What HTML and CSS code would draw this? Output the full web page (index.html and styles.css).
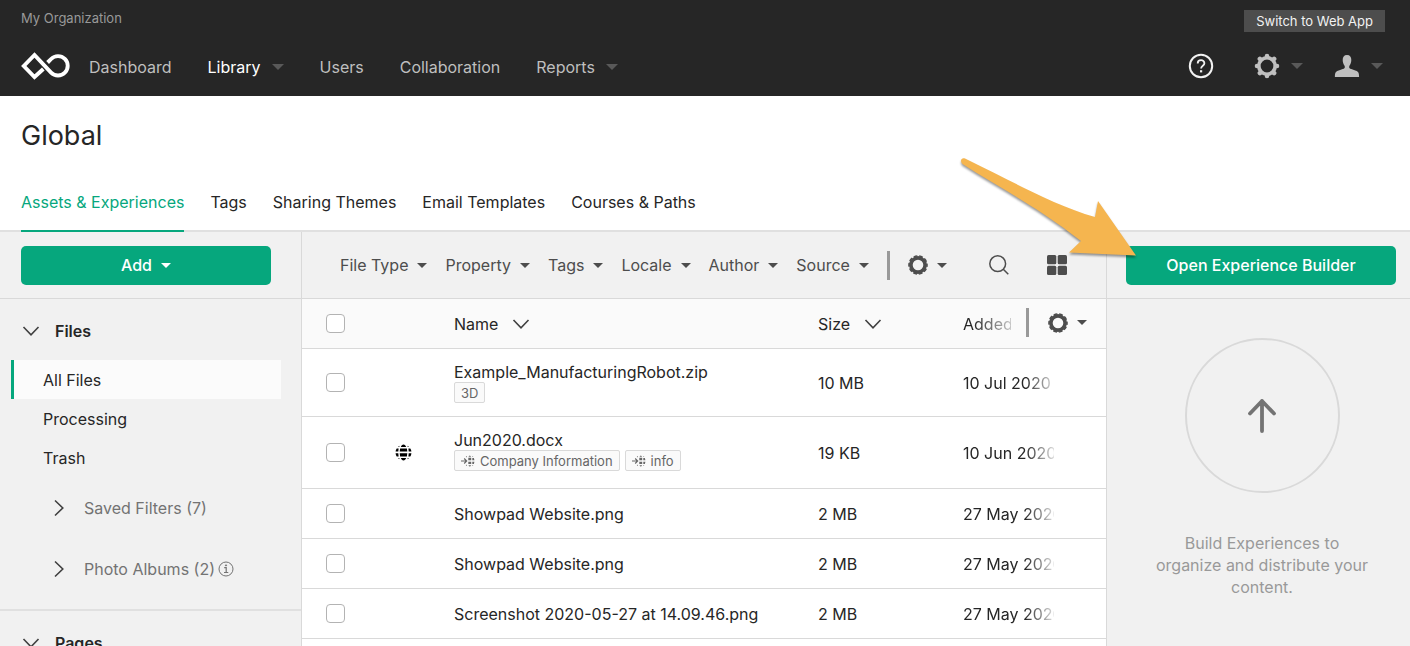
FILE: index.html
```html
<!DOCTYPE html>
<html lang="en">
<head>
<meta charset="utf-8">
<title>Global - Library</title>
<link rel="stylesheet" href="styles.css">
</head>
<body>
<svg class="sprite" aria-hidden="true">
  <symbol id="caret" viewBox="0 0 12 6"><path d="M0 0h12L6 6z" fill="currentColor"/></symbol>
  <symbol id="chevron" viewBox="0 0 18 18"><path d="M1.500 5 9 12.800 16.500 5" fill="none" stroke="currentColor" stroke-width="1.600"/></symbol>
  <symbol id="gear" viewBox="0 0 26 26">
    <circle cx="13" cy="13" r="8.200" fill="none" stroke="currentColor" stroke-width="3.600"/>
    <g stroke="currentColor" stroke-width="4.600" stroke-linecap="round">
      <path d="M13 3v1M13 22v1M3 13h1M22 13h1M5.900 5.900l.7.7M19.400 19.400l.7.7M5.900 20.100l.7-.7M19.400 6.600l.7-.7"/>
    </g>
  </symbol>
  <symbol id="cog" viewBox="0 0 20 20">
    <circle cx="10" cy="10" r="7.100" fill="none" stroke="currentColor" stroke-width="3.600"/>
    <circle cx="10" cy="10" r="9" fill="none" stroke="currentColor" stroke-width="1.600" stroke-dasharray="3.800 1.855" stroke-dashoffset="1.900"/>
  </symbol>
  <symbol id="globe" viewBox="0 0 18 18">
    <g fill="currentColor">
      <path d="M6.200 3.300C6.700 1.700 7.700.7 9 .5c1.300.2 2.300 1.200 2.800 2.800zM6.200 14.700c.5 1.600 1.500 2.600 2.800 2.800 1.300-.2 2.300-1.200 2.800-2.800zM5.400 4.700h7.200l.4 3.300H5zM5 9.800h8l-.4 3.400H5.400z"/>
      <path d="M1.800 4.700h2L3.500 8H.600q.2-1.900 1.200-3.300zM.6 9.800h2.900l.3 3.400h-2Q.8 11.700.6 9.800zM16.200 4.700h-2l.3 3.300h2.900q-.2-1.900-1.200-3.300zM17.400 9.800h-2.900l-.3 3.400h2q1-1.500 1.200-3.400zM3 3.200 5 1.800l-.6 1.500zM15 3.200l-2-1.400.6 1.500zM3 14.800l2 1.400-.6-1.500zM15 14.800l-2 1.400.6-1.500z"/>
    </g>
  </symbol>
  <symbol id="linked" viewBox="0 0 14 12">
    <path d="M0 6h5.500M3.200 3.500 5.700 6 3.200 8.500" fill="none" stroke="currentColor" stroke-width="1.100"/>
    <path d="M7.300 2.800h2.900v2.400H7.300zM7.300 6.700h2.900v2.400H7.300zM11.300 3h1.600l.5 2.200h-2.100zM11.300 6.700h2.100l-.5 2.200h-1.600zM7.500 1.800Q8 .6 8.800.4q.8.200 1.300 1.400zM7.500 10.200q.5 1.200 1.300 1.400.8-.2 1.300-1.400zM4.700 1.900l1.300-.8v1.100zM4.700 10.100l1.300.8V9.800zM11.200 1l1.200.9-1 .2zM11.200 11l1.200-.9-1-.2z" fill="currentColor"/>
  </symbol>
</svg>

<header class="topbar">
  <div class="topbar-meta">
    <span class="org">My Organization</span>
    <button class="switch" type="button">Switch to Web App</button>
  </div>
  <div class="topbar-row">
    <a class="logo" href="#" aria-label="Home">
      <svg width="50" height="28" viewBox="0 0 50 28"><path d="M22.300 17 13.500 25 2.800 14 13.500 3 30.100 20.600A9.700 9.700 0 1 0 30.100 7L26.600 10.500" fill="none" stroke="#fff" stroke-width="3.900"/></svg>
    </a>
    <nav class="mainnav">
      <a href="#">Dashboard</a>
      <a class="current" href="#">Library<svg class="navcaret"><use href="#caret"/></svg></a>
      <a href="#">Users</a>
      <a href="#">Collaboration</a>
      <a href="#">Reports<svg class="navcaret"><use href="#caret"/></svg></a>
    </nav>
    <div class="account">
      <button class="help" type="button" aria-label="Help">
        <svg width="26" height="26" viewBox="0 0 26 26" fill="none" stroke="#f2f2f2"><circle cx="13" cy="13" r="11.200" stroke-width="2"/><path d="M9.700 10.400c0-4.200 6.700-4.200 6.700-.2 0 2.500-3.300 2.500-3.300 5.200" stroke-width="1.800"/><path d="M13.100 17.200v2.200" stroke-width="2.200"/></svg>
      </button>
      <button type="button" aria-label="Settings"><svg width="26" height="26"><use href="#gear"/></svg><svg class="navcaret"><use href="#caret"/></svg></button>
      <button type="button" aria-label="Profile">
        <svg width="26" height="26" viewBox="0 0 26 26"><path d="M13 2c3.100 0 4.300 2 4.300 5 0 2.300-.8 4.500-2 6-.5 2 .2 2.500 2 3.100l4.700 1.700c2.200.8 3.100 2 3.100 6.200H.9c0-4.200.9-5.400 3.100-6.200l4.700-1.700c1.800-.6 2.500-1.100 2-3.100-1.200-1.500-2-3.700-2-6 0-3 1.200-5 4.300-5z" fill="currentColor"/></svg>
        <svg class="navcaret"><use href="#caret"/></svg>
      </button>
    </div>
  </div>
</header>

<section class="heading">
  <h1>Global</h1>
  <nav class="tabs">
    <a class="active" href="#">Assets &amp; Experiences</a>
    <a href="#">Tags</a>
    <a href="#">Sharing Themes</a>
    <a href="#">Email Templates</a>
    <a href="#">Courses &amp; Paths</a>
  </nav>
</section>

<div class="workspace">
  <aside class="sidebar">
    <div class="bar">
      <button class="primary" type="button">Add<svg class="caret"><use href="#caret"/></svg></button>
    </div>
    <section class="group">
      <h2><svg class="chev"><use href="#chevron"/></svg>Files</h2>
      <a class="item selected" href="#">All Files</a>
      <a class="item" href="#">Processing</a>
      <a class="item" href="#">Trash</a>
      <a class="sub" href="#"><svg class="chev right"><use href="#chevron"/></svg>Saved Filters (7)</a>
      <a class="sub" href="#"><svg class="chev right"><use href="#chevron"/></svg>Photo Albums (2)
        <svg class="info" viewBox="0 0 16 16" fill="none" stroke="currentColor"><circle cx="8" cy="8" r="7"/><path d="M6.200 6.700h2v4.600M6 11.500h4.300" stroke-width="1.200"/><circle cx="8" cy="4.400" r=".6" fill="currentColor"/></svg>
      </a>
    </section>
    <section class="group">
      <h2><svg class="chev"><use href="#chevron"/></svg>Pages</h2>
    </section>
  </aside>

  <main class="library">
    <div class="bar filters">
      <button type="button">File Type<svg class="caret"><use href="#caret"/></svg></button>
      <button type="button">Property<svg class="caret"><use href="#caret"/></svg></button>
      <button type="button">Tags<svg class="caret"><use href="#caret"/></svg></button>
      <button type="button">Locale<svg class="caret"><use href="#caret"/></svg></button>
      <button type="button">Author<svg class="caret"><use href="#caret"/></svg></button>
      <button type="button">Source<svg class="caret"><use href="#caret"/></svg></button>
      <span class="divider"></span>
      <button type="button" aria-label="Filter settings"><svg class="icon"><use href="#cog"/></svg><svg class="caret"><use href="#caret"/></svg></button>
      <div class="views">
        <button type="button" aria-label="Search"><svg class="icon" viewBox="0 0 20 20" fill="none" stroke="currentColor" stroke-width="1.500"><circle cx="8.700" cy="8.700" r="7.900"/><path d="m14.300 14.300 5 5"/></svg></button>
        <button type="button" aria-label="Grid view"><svg class="icon" viewBox="0 0 20 20" fill="currentColor"><rect width="9.300" height="9.300" rx="1.500"/><rect x="10.700" width="9.300" height="9.300" rx="1.500"/><rect y="10.700" width="9.300" height="9.300" rx="1.500"/><rect x="10.700" y="10.700" width="9.300" height="9.300" rx="1.500"/></svg></button>
      </div>
    </div>
    <table class="files">
      <colgroup><col class="c-check"><col class="c-icon"><col><col class="c-size"><col class="c-added"></colgroup>
      <thead>
        <tr>
          <th><input type="checkbox" aria-label="Select all"></th>
          <th></th>
          <th><span class="sort">Name<svg class="chev"><use href="#chevron"/></svg></span></th>
          <th><span class="sort">Size<svg class="chev"><use href="#chevron"/></svg></span></th>
          <th><div class="lastcol"><span class="fade-head">Added</span><span class="divider"></span><button type="button" aria-label="Column settings"><svg class="icon"><use href="#cog"/></svg><svg class="caret"><use href="#caret"/></svg></button></div></th>
        </tr>
      </thead>
      <tbody>
        <tr class="tall">
          <td><input type="checkbox" aria-label="Select Example_ManufacturingRobot.zip"></td><td></td>
          <td>Example_ManufacturingRobot.zip<div class="tags"><span class="tag">3D</span></div></td>
          <td>10 MB</td><td><span class="fade">10 Jul 2020</span></td>
        </tr>
        <tr class="taller">
          <td><input type="checkbox" aria-label="Select Jun2020.docx"></td>
          <td><svg class="globe"><use href="#globe"/></svg></td>
          <td>Jun2020.docx<div class="tags"><span class="tag"><svg class="linked"><use href="#linked"/></svg>Company Information</span><span class="tag"><svg class="linked"><use href="#linked"/></svg>info</span></div></td>
          <td>19 KB</td><td><span class="fade">10 Jun 2020</span></td>
        </tr>
        <tr>
          <td><input type="checkbox" aria-label="Select Showpad Website.png"></td><td></td>
          <td>Showpad Website.png</td><td>2 MB</td><td><span class="fade">27 May 2020</span></td>
        </tr>
        <tr>
          <td><input type="checkbox" aria-label="Select Showpad Website.png"></td><td></td>
          <td>Showpad Website.png</td><td>2 MB</td><td><span class="fade">27 May 2020</span></td>
        </tr>
        <tr>
          <td><input type="checkbox" aria-label="Select Screenshot"></td><td></td>
          <td>Screenshot 2020-05-27 at 14.09.46.png</td><td>2 MB</td><td><span class="fade">27 May 2020</span></td>
        </tr>
      </tbody>
    </table>
  </main>

  <aside class="builder">
    <div class="bar">
      <button class="primary" type="button">Open Experience Builder</button>
      <svg class="pointer" viewBox="0 0 190 110"><path d="M7 3.500C50 24 95 50 137 62L140 46 178 100.500 111 97.500 123 86C80 52 40 32 4.500 9 1.500 6 3.500 2 7 3.500z" fill="#f5b54f"/></svg>
    </div>
    <div class="empty">
      <div class="ring"><svg width="30" height="36" viewBox="0 0 30 36" fill="none" stroke="#737373" stroke-width="3.800" stroke-linecap="round" stroke-linejoin="round"><path d="M15 33V3M3 15.500 15 3l12 12.500"/></svg></div>
      <p>Build Experiences to organize and distribute your content.</p>
    </div>
  </aside>
</div>
</body>
</html>
```
FILE: styles.css
```css
* { box-sizing: border-box; }

body {
  margin: 0;
  height: 100vh;
  display: flex;
  flex-direction: column;
  overflow: hidden;
  font: 16px/20px Inter, "Liberation Sans", sans-serif;
  color: #262626;
  background: #fff;
}

a { color: inherit; text-decoration: none; }

button {
  display: inline-flex;
  align-items: center;
  padding: 0;
  border: 0;
  background: none;
  font: inherit;
  color: inherit;
}

svg { flex: none; display: block; }
.sprite { position: absolute; width: 0; height: 0; }

/* Top bar */
.topbar {
  flex: none;
  padding: 10px 25px 0 21px;
  background: #262626;
  color: #bfbfbf;
}
.topbar-row { display: flex; align-items: center; height: 64px; padding-top: 3px; }
.topbar-meta { display: flex; align-items: flex-start; justify-content: space-between; }
.org { font-size: 13px; line-height: 17px; color: #999; }
.switch {
  height: 22px;
  padding: 0 12px;
  background: #4d4d4d;
  color: #f2f2f2;
  font-size: 13px;
}
.logo { margin-right: 18px; }
.mainnav { display: flex; gap: 36px; padding-top: 3px; }
.mainnav a { display: flex; align-items: center; }
.mainnav .current { color: #fff; }
.navcaret { width: 12px; height: 6px; margin-left: 11px; color: #595959; }
.account { display: flex; gap: 31px; margin-left: auto; padding-right: 2px; }
.help { margin-right: 9px; }

/* Page heading */
.heading { flex: none; padding: 22px 21px 0; border-bottom: 2px solid #e0e0e0; }
h1 { margin: 0; font-size: 27px; line-height: 36px; font-weight: 400; }
.tabs { display: flex; gap: 26px; margin-top: 38px; }
.tabs a { padding-bottom: 18px; margin-bottom: -2px; border-bottom: 2px solid transparent; }
.tabs .active { color: #06a77d; border-color: #06a77d; }

/* Three-column workspace */
.workspace { flex: 1; min-height: 0; display: flex; background: #f1f1f1; }
.bar {
  display: flex;
  align-items: center;
  height: 67px;
  flex: none;
  border-bottom: 1px solid #d9d9d9;
}
.primary {
  flex: 1;
  justify-content: center;
  height: 39px;
  border-radius: 5px;
  background: #06a77d;
  color: #fff;
  font-weight: 500;
}
.caret { width: 10px; height: 5px; margin-left: 9px; }
.chev { width: 18px; height: 18px; color: #404040; }
.right { transform: rotate(-90deg); }

/* Sidebar */
.sidebar { flex: none; width: 302px; border-right: 1px solid #d9d9d9; }
.sidebar .bar { padding: 0 30px 0 21px; }
.group { padding: 22px 20px 10px 11px; border-bottom: 2px solid #e0e0e0; }
h2 {
  display: flex;
  align-items: center;
  gap: 15px;
  margin: 0 0 19px 11px;
  font-size: 16px;
  line-height: 20px;
  font-weight: 600;
}
.item { display: flex; align-items: center; height: 39px; padding-left: 29px; border-left: 3px solid transparent; }
.selected { background: #fbfbfb; border-color: #06a77d; }
.sub {
  display: flex;
  align-items: center;
  height: 61px;
  padding-left: 39px;
  color: #737373;
}
.sub .chev { margin-right: 16px; }
.info { width: 16px; height: 16px; margin-left: 3px; }

/* File list */
.library { flex: 1; min-width: 0; background: #fff; }
.filters { gap: 18px; padding: 0 39px 0 38px; background: #f1f1f1; color: #4d4d4d; }
.divider { flex: none; width: 3px; height: 29px; background: #999; }
.icon { width: 20px; height: 20px; }
.views { display: flex; gap: 38px; margin-left: auto; }

.files { width: 100%; table-layout: fixed; border-collapse: separate; border-spacing: 0; }
.c-check, .c-icon { width: 76px; }
.c-size { width: 145px; }
.c-added { width: 143px; }
th { height: 50px; background: #fafafa; font-weight: 400; text-align: left; }
th, td { padding: 0; border-bottom: 1px solid #d9d9d9; vertical-align: middle; }
td { height: 50px; }
.tall td { height: 68px; }
.taller td { height: 72px; }
.taller td:nth-child(3) { padding-bottom: 4px; }
th:first-child, td:first-child { padding-left: 24px; }
td:nth-child(2) { padding-left: 17px; }
input[type="checkbox"] {
  appearance: none;
  display: block;
  width: 19px;
  height: 19px;
  margin: 0;
  border: 1px solid #b3b3b3;
  border-radius: 4px;
  background: #fff;
}
.sort { display: flex; align-items: center; gap: 14px; }
.lastcol { display: flex; align-items: center; padding-bottom: 2px; color: #4d4d4d; }
.lastcol .divider { margin: 0 19px 0 15px; }
.fade-head { width: 48px; padding-top: 2px; overflow: hidden; color: #262626; mask-image: linear-gradient(to right, #000 10px, transparent 60px); }
.fade {
  display: block;
  width: 91px;
  overflow: hidden;
  white-space: nowrap;
  mask-image: linear-gradient(to right, #000 62px, transparent 96px);
}
.globe { width: 17px; height: 17px; color: #000; }
.tags { display: flex; gap: 5px; }
.tag {
  display: flex;
  align-items: center;
  height: 21px;
  padding: 0 6px;
  border: 1px solid #d9d9d9;
  border-radius: 2px;
  background: #fafafa;
  color: #666;
  font-size: 13px;
}
.linked { width: 14px; height: 12px; margin-right: 5px; }

/* Experience builder panel */
.builder { flex: none; width: 304px; border-left: 1px solid #d9d9d9; }
.builder .bar { position: relative; padding: 0 14px 0 19px; }
.pointer {
  position: absolute;
  left: -149px;
  top: -77px;
  width: 190px;
  height: 110px;
  filter: drop-shadow(0 2px 1px #0006);
}
.empty { display: flex; flex-direction: column; align-items: center; padding: 39px 37px 39px 44px; }
.ring {
  display: grid;
  place-items: center;
  width: 155px;
  height: 155px;
  border: 2px solid #d9d9d9;
  border-radius: 50%;
}
.empty p { margin: 39px 0 0; line-height: 22px; text-align: center; color: #999; }
```
